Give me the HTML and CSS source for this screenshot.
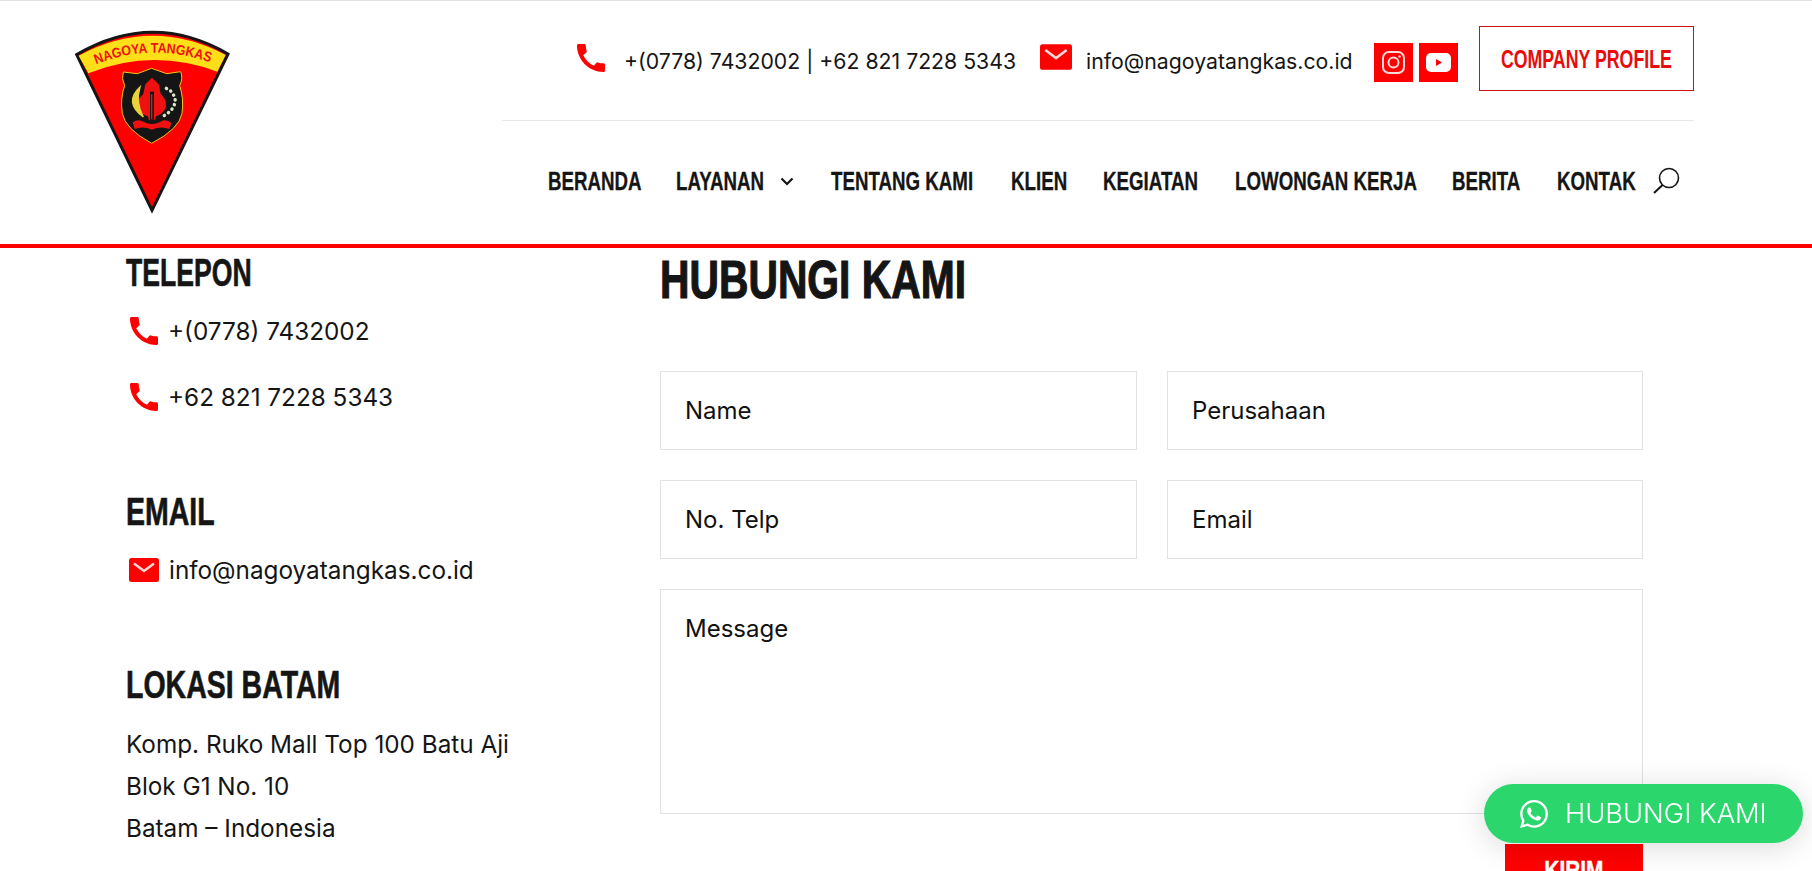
FILE: index.html
```html
<!DOCTYPE html>
<html>

<head>
	<title>Hubungi Kami - Nagoya Tangkas</title>
	<link rel="stylesheet" href="styles.css">
</head>

<body>

	<header class="header">
		<a class="logo" href="#">
			<svg width="180" height="200" viewBox="0 0 540 600">
				<path d="M50 89 Q277 -44 504 87 L276 556 Z" fill="#ff0000" stroke="#151515" stroke-width="9" stroke-linejoin="miter"/>
				<path d="M56 92 Q277 -26 497 90 L472 140 Q277 68 85 145 Z" fill="#ffdf18"/>
				<path id="logoArc" d="M108 118 Q277 50 455 114" fill="none"/>
				<text class="logo-text" fill="#f01010"><textPath href="#logoArc" textLength="350" lengthAdjust="spacingAndGlyphs">NAGOYA TANGKAS</textPath></text>
				<path d="M275 130 L320 146 L362 140 Q370 160 359 182 Q372 220 366 265 Q358 312 275 355 Q195 312 187 265 Q180 220 194 182 Q183 160 190 141 L232 146 Z" fill="#151515" stroke="#f5c518" stroke-width="3"/>
				<path d="M276 158 L296 178 L302 206 Q326 230 314 254 Q304 270 288 274 L286 284 L266 284 L264 274 Q248 270 238 254 Q226 230 250 206 L256 178 Z" fill="#f01010"/>
				<path d="M270 200 L282 200 L282 284 L270 284 Z" fill="#151515"/>
				<path d="M275 208 L275 282" stroke="#f01010" stroke-width="4"/>
				<path d="M240 186 Q190 232 250 276 Q226 232 240 186 Z" fill="#e8d43a" stroke="#e8d43a" stroke-width="4"/>
				<path d="M319 190 L332 198 L342 212 L346 226 L343 240 L335 254 L324 264 L312 272" fill="none" stroke="#d8e8c4" stroke-width="10" stroke-linecap="round" stroke-dasharray="1 14"/>
				<path d="M218 292 Q236 280 250 290 Q276 304 302 290 Q318 280 334 294 L328 312 Q302 302 276 314 Q250 302 224 312 Z" fill="#f01010"/>
			</svg>
		</a>
		<div class="header-right">
			<div class="topbar">
				<svg class="top-phone" viewBox="3 3 18 18"><path d="M20.01 15.38c-1.23 0-2.42-.2-3.53-.56a.977.977 0 0 0-1.01.24l-1.57 1.97c-2.83-1.35-5.48-3.9-6.89-6.83l1.95-1.66c.27-.28.35-.67.24-1.02-.37-1.11-.56-2.3-.56-3.53 0-.54-.45-.99-.99-.99H4.19C3.65 3 3 3.24 3 3.99 3 13.28 10.73 21 20.01 21c.71 0 .99-.63.99-1.18v-3.45c0-.54-.45-.99-.99-.99z" fill="#ff0000"/></svg>
				<span class="top-text phone-text">+(0778) 7432002 | +62 821 7228 5343</span>
				<svg class="top-mail" viewBox="0 0 30 24"><rect width="30" height="24" rx="2.5" fill="#ff0000"/><path d="M5 5.5 L15 13 L25 5.5" fill="none" stroke="#ffd9d9" stroke-width="2.4"/></svg>
				<span class="top-text mail-text">info@nagoyatangkas.co.id</span>
				<a class="social" href="#">
					<svg width="25" height="25" viewBox="0 0 25 25"><rect x="2" y="2" width="21" height="21" rx="6" fill="none" stroke="#ffdada" stroke-width="2"/><circle cx="12.5" cy="12.5" r="5" fill="none" stroke="#ffdada" stroke-width="2"/><circle cx="18.5" cy="6.5" r="1.2" fill="#ffdada"/></svg>
				</a>
				<a class="social social-yt" href="#">
					<svg width="27" height="21" viewBox="0 0 27 21"><rect x="1" y="1" width="25" height="19" rx="5" fill="#fff"/><path d="M11 7 L17 10.5 L11 14 Z" fill="#ff0000"/></svg>
				</a>
				<a class="profile-btn" href="#"><span class="cond">COMPANY PROFILE</span></a>
			</div>
			<nav class="nav">
				<a class="cond nav-beranda" href="#">BERANDA</a>
				<a class="cond nav-layanan" href="#">LAYANAN</a>
				<svg class="chevron" width="14" height="9" viewBox="0 0 14 9"><path d="M1.5 1.5 L7 7 L12.5 1.5" fill="none" stroke="#151515" stroke-width="2.2"/></svg>
				<a class="cond nav-tentang" href="#">TENTANG KAMI</a>
				<a class="cond nav-klien" href="#">KLIEN</a>
				<a class="cond nav-kegiatan" href="#">KEGIATAN</a>
				<a class="cond nav-lowongan" href="#">LOWONGAN KERJA</a>
				<a class="cond nav-berita" href="#">BERITA</a>
				<a class="cond nav-kontak" href="#">KONTAK</a>
				<svg class="search" width="28" height="28" viewBox="0 0 28 28"><circle cx="17" cy="11" r="9.5" fill="none" stroke="#151515" stroke-width="1.6"/><path d="M10.5 18 L2 26" stroke="#151515" stroke-width="2"/></svg>
			</nav>
		</div>
	</header>

	<main class="content">
		<section class="info">
			<h3 class="cond telepon-head">TELEPON</h3>
			<p class="contact-row">
				<svg class="row-phone" viewBox="3 3 18 18"><path d="M20.01 15.38c-1.23 0-2.42-.2-3.53-.56a.977.977 0 0 0-1.01.24l-1.57 1.97c-2.83-1.35-5.48-3.9-6.89-6.83l1.95-1.66c.27-.28.35-.67.24-1.02-.37-1.11-.56-2.3-.56-3.53 0-.54-.45-.99-.99-.99H4.19C3.65 3 3 3.24 3 3.99 3 13.28 10.73 21 20.01 21c.71 0 .99-.63.99-1.18v-3.45c0-.54-.45-.99-.99-.99z" fill="#ff0000"/></svg>
				+(0778) 7432002
			</p>
			<p class="contact-row">
				<svg class="row-phone" viewBox="3 3 18 18"><path d="M20.01 15.38c-1.23 0-2.42-.2-3.53-.56a.977.977 0 0 0-1.01.24l-1.57 1.97c-2.83-1.35-5.48-3.9-6.89-6.83l1.95-1.66c.27-.28.35-.67.24-1.02-.37-1.11-.56-2.3-.56-3.53 0-.54-.45-.99-.99-.99H4.19C3.65 3 3 3.24 3 3.99 3 13.28 10.73 21 20.01 21c.71 0 .99-.63.99-1.18v-3.45c0-.54-.45-.99-.99-.99z" fill="#ff0000"/></svg>
				+62 821 7228 5343
			</p>
			<h3 class="cond email-head">EMAIL</h3>
			<p class="contact-row">
				<svg class="row-mail" viewBox="0 0 30 24"><rect width="30" height="24" rx="2.5" fill="#ff0000"/><path d="M5 5.5 L15 13 L25 5.5" fill="none" stroke="#ffd9d9" stroke-width="2.4"/></svg>
				info@nagoyatangkas.co.id
			</p>
			<h3 class="cond lokasi-head">LOKASI BATAM</h3>
			<p class="address">Komp. Ruko Mall Top 100 Batu Aji<br>Blok G1 No. 10<br>Batam – Indonesia</p>
		</section>

		<section class="form-wrap">
			<h1 class="cond">HUBUNGI KAMI</h1>
			<form class="form">
				<input type="text" placeholder="Name">
				<input type="text" placeholder="Perusahaan">
				<input type="text" placeholder="No. Telp">
				<input type="text" placeholder="Email">
				<textarea placeholder="Message"></textarea>
				<button class="kirim" type="button"><span class="cond">KIRIM</span></button>
			</form>
		</section>
	</main>

	<a class="wa-btn" href="#">
		<svg width="28" height="28" viewBox="0 0 24 24"><path d="M17.472 14.382c-.297-.149-1.758-.867-2.03-.967-.273-.099-.471-.148-.67.15-.197.297-.767.966-.94 1.164-.173.199-.347.223-.644.075-.297-.15-1.255-.463-2.39-1.475-.883-.788-1.48-1.761-1.653-2.059-.173-.297-.018-.458.13-.606.134-.133.298-.347.446-.52.149-.174.198-.298.298-.497.099-.198.05-.371-.025-.52-.075-.149-.669-1.612-.916-2.207-.242-.579-.487-.5-.669-.51-.173-.008-.371-.01-.57-.01-.198 0-.52.074-.792.372-.272.297-1.04 1.016-1.04 2.479 0 1.462 1.065 2.875 1.213 3.074.149.198 2.096 3.2 5.077 4.487.709.306 1.262.489 1.694.625.712.227 1.36.195 1.871.118.571-.085 1.758-.719 2.006-1.413.248-.694.248-1.289.173-1.413-.074-.124-.272-.198-.57-.347m-5.421 7.403h-.004a9.87 9.87 0 01-5.031-1.378l-.361-.214-3.741.982.998-3.648-.235-.374a9.86 9.86 0 01-1.51-5.26c.001-5.45 4.436-9.884 9.888-9.884 2.64 0 5.122 1.03 6.988 2.898a9.825 9.825 0 012.893 6.994c-.003 5.45-4.437 9.884-9.885 9.884m8.413-18.297A11.815 11.815 0 0012.05 0C5.495 0 .16 5.335.157 11.892c0 2.096.547 4.142 1.588 5.945L.057 24l6.305-1.654a11.882 11.882 0 005.683 1.448h.005c6.554 0 11.89-5.335 11.893-11.893a11.821 11.821 0 00-3.48-8.413z" fill="#fff"/></svg>
		HUBUNGI KAMI
	</a>

</body>

</html>
```

FILE: styles.css
```css
* {
	box-sizing: border-box;
}

html,
body {
	height: 871px;
	overflow: hidden;
}

body {
	margin: 0;
	background: #fff;
	color: #151515;
	font-family: Inter, "Liberation Sans", sans-serif;
	font-size: 24.3px;
}

a {
	color: inherit;
	text-decoration: none;
}

/* heading face: the site font is not installed, so squeeze a bold sans */
.cond {
	font-family: "Liberation Sans", sans-serif;
	font-weight: 700;
	white-space: nowrap;
	transform-origin: left center;
}

.header {
	display: flex;
	height: 248px;
	padding-left: 60px;
	border-top: 1px solid #e2e2e2;
	border-bottom: 4px solid #ff0000;
}

.logo {
	display: block;
	width: 442px;
	padding-top: 24px;
}

.logo-text {
	font-family: "Liberation Sans", sans-serif;
	font-weight: 700;
	font-size: 42px;
}

.header-right {
	width: 1192px;
}

.topbar {
	display: flex;
	align-items: center;
	height: 120px;
	padding-left: 75px;
	border-bottom: 1px solid #e8e8e8;
}

.top-phone {
	width: 28px;
	height: 28px;
	margin-top: -6px;
}

.top-text {
	font-size: 21.25px;
	white-space: nowrap;
}

.phone-text {
	margin-left: 19px;
}

.top-mail {
	width: 32px;
	height: 26px;
	margin-left: 24px;
	margin-top: -8px;
}

.mail-text {
	margin-left: 14px;
}

.social {
	display: flex;
	flex: none;
	align-items: center;
	justify-content: center;
	width: 39px;
	height: 39px;
	margin-left: 21px;
	margin-top: 3px;
	background: #ff0000;
}

.social-yt {
	margin-left: 6px;
}

.profile-btn {
	display: flex;
	flex: none;
	align-items: center;
	justify-content: center;
	width: 215px;
	height: 65px;
	margin-left: 21px;
	margin-top: -5px;
	padding-top: 3px;
	border: 1px solid #cc1111;
	color: #e80c0c;
	font-size: 25px;
}

.profile-btn .cond {
	display: block;
	transform: scaleX(0.71);
	transform-origin: center;
}

.nav {
	display: flex;
	align-items: center;
	height: 120px;
	padding-left: 46px;
	font-size: 26px;
}

.nav a {
	display: block;
	flex: none;
	transform: scaleX(0.72);
	-webkit-text-stroke: 0.3px #151515;
}

.nav-beranda { width: 128px; }
.nav-layanan { width: 104px; }
.nav-tentang { width: 180px; }
.nav-klien { width: 92px; }
.nav-kegiatan { width: 132px; }
.nav-lowongan { width: 217px; }
.nav-berita { width: 105px; }
.nav-kontak { width: 95px; }

.chevron {
	flex: none;
	width: 14px;
	margin-right: 37px;
}

.search {
	flex: none;
}

.content {
	display: flex;
	padding-left: 126px;
}

.info {
	width: 534px;
}

.info h3 {
	margin: 3px 0 0;
	font-size: 38px;
	line-height: 44px;
	transform: scaleX(0.75);
	-webkit-text-stroke: 0.6px #151515;
}

.info .telepon-head {
	transform: scaleX(0.7);
}

.contact-row {
	display: flex;
	align-items: center;
	gap: 9px;
	height: 40px;
	margin: 0;
	white-space: nowrap;
}

.row-phone {
	width: 28px;
	height: 28px;
	margin-left: 4px;
	margin-right: 1px;
}

.row-mail {
	width: 30px;
	height: 24px;
	margin-left: 3px;
	margin-right: 1px;
}

.info h3 + .contact-row {
	margin-top: 16px;
}

.contact-row + .contact-row {
	margin-top: 26px;
}

.info .email-head {
	margin-top: 73px;
	margin-bottom: 1px;
}

.info .lokasi-head {
	margin-top: 73px;
}

.address {
	margin: 16px 0 0;
	line-height: 42px;
	white-space: nowrap;
}

.form-wrap {
	width: 983px;
}

.form-wrap h1 {
	margin: -1px 0 0;
	font-size: 53px;
	line-height: 66px;
	transform: scaleX(0.77);
	-webkit-text-stroke: 1.2px #151515;
}

.form {
	display: grid;
	grid-template-columns: 477px 476px;
	justify-content: space-between;
	row-gap: 30px;
	margin-top: 58px;
}

.form input,
.form textarea {
	padding: 0 24px;
	border: 1px solid #e2e2e2;
	background: #fff;
	font-family: Inter, "Liberation Sans", sans-serif;
	font-size: 24px;
	color: #111;
	border-radius: 0;
	resize: none;
}

.form input {
	height: 79px;
}

.form textarea {
	grid-column: 1 / 3;
	height: 225px;
	padding-top: 24px;
}

.form ::placeholder {
	color: #111;
	opacity: 1;
}

.kirim {
	grid-column: 2;
	justify-self: end;
	display: flex;
	align-items: center;
	justify-content: center;
	width: 138px;
	height: 52px;
	border: none;
	background: #ff0000;
	color: #fff;
	font-size: 26px;
}

.kirim .cond {
	display: block;
	transform: scaleX(0.8);
	transform-origin: center;
	-webkit-text-stroke: 0.5px #fff;
}

.wa-btn {
	position: fixed;
	left: 1484px;
	top: 784px;
	display: flex;
	align-items: center;
	gap: 17px;
	width: 319px;
	height: 59px;
	padding-left: 36px;
	border-radius: 30px;
	background: #2bd66c;
	color: #fff;
	font-size: 27.3px;
	font-weight: 350;
	box-shadow: 0 4px 30px rgba(0, 0, 0, 0.15);
}
```
